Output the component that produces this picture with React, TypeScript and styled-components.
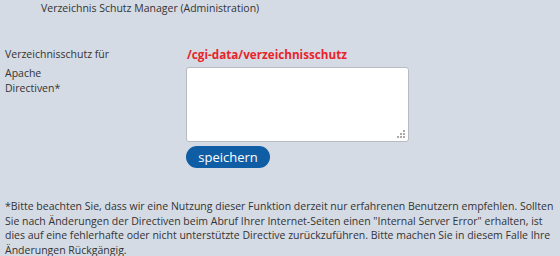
import React from "react";
import styled, { createGlobalStyle } from "styled-components";

const GlobalStyle = createGlobalStyle`
  html, body {
    margin: 0;
    padding: 0;
    background: #d5dbe4;
  }
  body {
    font-family: "Open Sans", "DejaVu Sans", sans-serif;
    font-size: 10.5px;
    color: #333;
  }
`;

const Page = styled.div`
  width: 560px;
  height: 256px;
  overflow: hidden;
`;

const Title = styled.div`
  padding: 1px 0 0 41px;
  height: 47px;
  box-sizing: border-box;
  line-height: 14px;
  color: #333;
`;

const Form = styled.div`
  display: grid;
  grid-template-columns: 181px 1fr;
  row-gap: 4px;
  padding-left: 5px;
`;

const Label = styled.div`
  line-height: 15px;
  white-space: nowrap;
`;

const Path = styled.div`
  color: #e8242b;
  font-weight: bold;
  font-size: 11.7px;
  line-height: 15px;
  padding-left: 1px;
`;

const Field = styled.div`
  display: flex;
  flex-direction: column;
  gap: 4px;
  padding-top: 1px;
  align-items: flex-start;
`;

const AreaWrap = styled.div`
  position: relative;

  &::after {
    content: "";
    position: absolute;
    right: 4px;
    bottom: 4px;
    width: 2px;
    height: 2px;
    background: #aaa;
    box-shadow: -3px 0 #aaa, -6px 0 #aaa, 0 -3px #aaa, -3px -3px #aaa, 0 -6px #aaa;
  }
`;

const TextArea = styled.textarea`
  display: block;
  width: 223px;
  height: 75px;
  box-sizing: border-box;
  border: 1px solid #b8bcc2;
  border-radius: 3px;
  background: #fff;
  margin: 0;
  resize: none;
`;

const SaveButton = styled.button`
  width: 84px;
  height: 22px;
  border: none;
  border-radius: 11px;
  background: #0f5da4;
  color: #fff;
  font-family: inherit;
  font-size: 13px;
  padding: 0;
  line-height: 22px;
`;

const Note = styled.p`
  margin: 31px 0 0 5px;
  line-height: 14.6px;
  white-space: nowrap;
`;

export default function App() {
  return (
    <Page>
      <GlobalStyle />
      <Title>Verzeichnis Schutz Manager (Administration)</Title>
      <Form>
        <Label>Verzeichnisschutz für</Label>
        <Path>/cgi-data/verzeichnisschutz</Path>
        <Label>
          Apache
          <br />
          Directiven*
        </Label>
        <Field>
          <AreaWrap>
            <TextArea />
          </AreaWrap>
          <SaveButton>speichern</SaveButton>
        </Field>
      </Form>
      <Note>
        *Bitte beachten Sie, dass wir eine Nutzung dieser Funktion derzeit nur erfahrenen Benutzern empfehlen. Sollten
        <br />
        Sie nach Änderungen der Directiven beim Abruf Ihrer Internet-Seiten einen "Internal Server Error" erhalten, ist
        <br />
        dies auf eine fehlerhafte oder nicht unterstützte Directive zurückzuführen. Bitte machen Sie in diesem Falle Ihre
        <br />
        Änderungen Rückgängig.
      </Note>
    </Page>
  );
}
